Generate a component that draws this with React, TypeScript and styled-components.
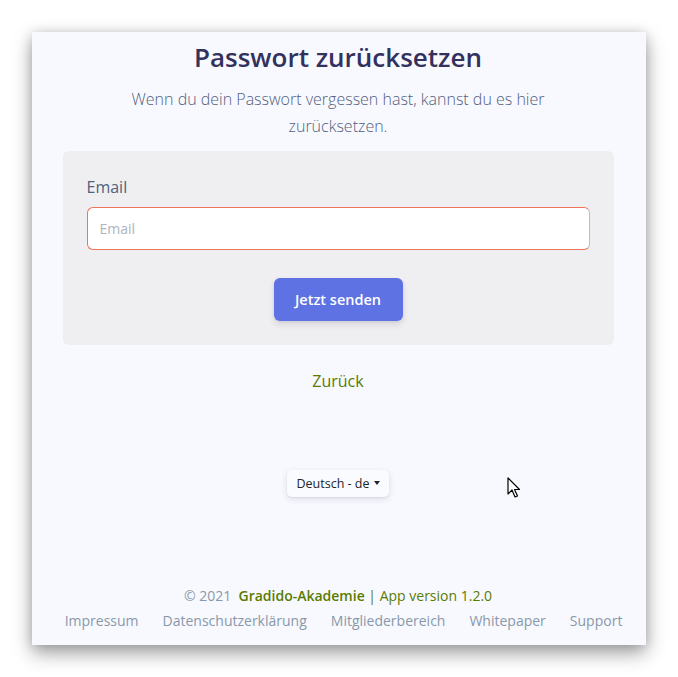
import React from "react";
import styled, { createGlobalStyle } from "styled-components";

const Global = createGlobalStyle`
  html, body { margin: 0; padding: 0; background: #ffffff; }
  body { font-family: "Open Sans", "Noto Sans", sans-serif; -webkit-font-smoothing: antialiased; }
  * { box-sizing: border-box; }
`;

const Stage = styled.div`
  width: 678px;
  height: 677px;
  padding: 32px 32px 32px 32px;
  position: relative;
`;

const Window = styled.main`
  width: 614px;
  height: 613px;
  background: #f8f9fe;
  box-shadow: 0 8px 18px rgba(0, 0, 0, 0.38), 0 0 10px rgba(0, 0, 0, 0.12);
  display: flex;
  flex-direction: column;
  align-items: center;
  padding: 0 32px 0 30px;
`;

const Title = styled.h1`
  margin: 6px 0 0 0;
  font-size: 26px;
  font-weight: 600;
  line-height: 39px;
  color: #32325d;
  text-align: center;
`;

const Lead = styled.p`
  margin: 9px 0 0 0;
  max-width: 460px;
  font-size: 16px;
  font-weight: 300;
  line-height: 27px;
  color: #525f7f;
  text-align: center;
`;

const Card = styled.section`
  margin-top: 11px;
  width: 551px;
  background: #efeff1;
  border-radius: 6px;
  padding: 24px 24px 24px 24px;
  display: flex;
  flex-direction: column;
`;

const Label = styled.label`
  font-size: 16px;
  line-height: 24px;
  color: #525f7f;
`;

const Input = styled.input`
  margin-top: 8px;
  width: 100%;
  height: 43px;
  border: 1px solid #f0735a;
  border-right-color: #b8bccb;
  border-radius: 6px;
  background: #ffffff;
  padding: 0 12px;
  font-family: "Open Sans", sans-serif;
  font-size: 14px;
  color: #525f7f;
  outline: none;
  &::placeholder { color: #adb5bd; }
`;

const Actions = styled.div`
  display: flex;
  justify-content: center;
  margin-top: 28px;
`;

const Button = styled.button`
  width: 129px;
  height: 43px;
  border: none;
  border-radius: 6px;
  background: #5e72e4;
  color: #ffffff;
  font-family: "Open Sans", sans-serif;
  font-size: 14.5px;
  font-weight: 600;
  box-shadow: 0 4px 6px rgba(50, 50, 93, 0.11), 0 1px 3px rgba(0, 0, 0, 0.08);
`;

const BackLink = styled.a`
  margin-top: 24px;
  font-size: 16px;
  line-height: 24px;
  color: #5a7b02;
  text-decoration: none;
`;

const LangButton = styled.button`
  margin-top: 77px;
  height: 27px;
  padding: 0 9px 0 9px;
  border: none;
  border-radius: 5px;
  background: #fafbfe;
  box-shadow: 0 2px 6px rgba(50, 50, 93, 0.14), 0 1px 2px rgba(0, 0, 0, 0.06);
  font-family: "Open Sans", sans-serif;
  font-size: 12.5px;
  font-weight: 500;
  color: #212529;
  display: flex;
  align-items: center;
  gap: 4px;
`;

const Caret = styled.span`
  width: 0;
  height: 0;
  border-left: 3.5px solid transparent;
  border-right: 3.5px solid transparent;
  border-top: 4px solid #212529;
  margin-top: -2px;
`;

const Footer = styled.footer`
  margin-top: auto;
  margin-bottom: 12px;
  display: flex;
  flex-direction: column;
  align-items: center;
  gap: 1px;
  font-size: 14px;
  line-height: 24px;
`;

const Copy = styled.div`
  color: #8898aa;
  white-space: pre;
`;

const Brand = styled.a<{ $bold?: boolean }>`
  color: #5a7b02;
  font-weight: ${(p) => (p.$bold ? 600 : 400)};
  text-decoration: none;
`;

const Links = styled.nav`
  display: flex;
  gap: 24px;
  margin-left: 11px;
`;

const FooterLink = styled.a`
  color: #8898aa;
  text-decoration: none;
`;

const Cursor = styled.svg`
  position: absolute;
  left: 507px;
  top: 477px;
`;

export default function App() {
  return (
    <>
      <Global />
      <Stage>
        <Window>
          <Title>Passwort zurücksetzen</Title>
          <Lead>Wenn du dein Passwort vergessen hast, kannst du es hier zurücksetzen.</Lead>
          <Card>
            <Label>Email</Label>
            <Input placeholder="Email" />
            <Actions>
              <Button>Jetzt senden</Button>
            </Actions>
          </Card>
          <BackLink href="#">Zurück</BackLink>
          <LangButton>
            Deutsch - de <Caret />
          </LangButton>
          <Footer>
            <Copy>
              © 2021  <Brand $bold href="#">Gradido-Akademie</Brand> <Brand href="#">| App version 1.2.0</Brand>
            </Copy>
            <Links>
              <FooterLink href="#">Impressum</FooterLink>
              <FooterLink href="#">Datenschutzerklärung</FooterLink>
              <FooterLink href="#">Mitgliederbereich</FooterLink>
              <FooterLink href="#">Whitepaper</FooterLink>
              <FooterLink href="#">Support</FooterLink>
            </Links>
          </Footer>
        </Window>
        <Cursor width="14" height="22" viewBox="0 0 14 22">
          <path d="M1 1 L1 17 L5 13 L8 20 L10.5 19 L7.5 12.5 L12.5 12.5 Z" fill="#ffffff" stroke="#000000" strokeWidth="1.2" strokeLinejoin="round" />
        </Cursor>
      </Stage>
    </>
  );
}
